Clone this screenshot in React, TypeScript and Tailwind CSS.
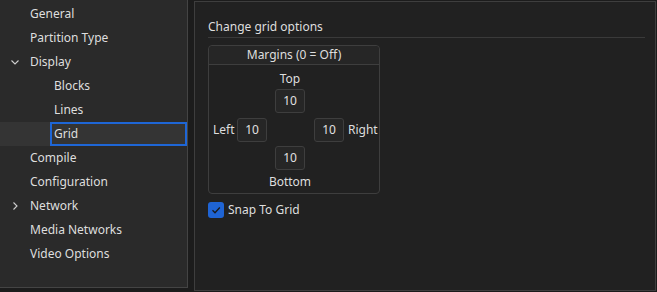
import React from "react";

const font = { fontFamily: '"Noto Sans", "Open Sans", sans-serif' };

function Chevron({ down }: { down: boolean }) {
  return (
    <svg width="10" height="10" viewBox="0 0 10 10" className="text-[#cfcfcf]">
      {down ? (
        <path d="M1.5 3.5 L5 7 L8.5 3.5" fill="none" stroke="currentColor" strokeWidth="1.1" />
      ) : (
        <path d="M3.5 1.5 L7 5 L3.5 8.5" fill="none" stroke="currentColor" strokeWidth="1.1" />
      )}
    </svg>
  );
}

type Item = { label: string; level: number; chevron?: "down" | "right"; selected?: boolean };

const items: Item[] = [
  { label: "General", level: 0 },
  { label: "Partition Type", level: 0 },
  { label: "Display", level: 0, chevron: "down" },
  { label: "Blocks", level: 1 },
  { label: "Lines", level: 1 },
  { label: "Grid", level: 1, selected: true },
  { label: "Compile", level: 0 },
  { label: "Configuration", level: 0 },
  { label: "Network", level: 0, chevron: "right" },
  { label: "Media Networks", level: 0 },
  { label: "Video Options", level: 0 },
];

function NumBox({ v }: { v: string }) {
  return (
    <div className="w-[30px] h-[24px] flex items-center justify-center rounded-[3px] border border-[#3e3e3e] bg-[#262626] text-[12px] text-[#e0e0e0]">
      {v}
    </div>
  );
}

export default function App() {
  return (
    <div className="w-[657px] h-[292px] bg-[#1c1c1c] flex text-[12px] text-[#dedede]" style={font}>
      <div className="w-[188px] h-[288px] bg-[#2a2a2a] border-r border-b border-[#444444] pt-[2px] flex flex-col">
        {items.map((it) => (
          <div
            key={it.label}
            className={`h-[24px] flex items-center ${it.selected ? "bg-[#343434]" : ""}`}
          >
            {it.level === 0 ? (
              <>
                <div className="w-[30px] flex items-center pl-[10px]">
                  {it.chevron ? <Chevron down={it.chevron === "down"} /> : null}
                </div>
                <span>{it.label}</span>
              </>
            ) : it.selected ? (
              <>
                <div className="w-[50px]" />
                <div className="flex-1 h-[24px] border-2 border-[#1e66d6] flex items-center pl-[2px]">
                  {it.label}
                </div>
              </>
            ) : (
              <>
                <div className="w-[54px]" />
                <span>{it.label}</span>
              </>
            )}
          </div>
        ))}
      </div>
      <div className="ml-[6px] mt-[1px] w-[462px] h-[290px] bg-[#212121] border border-[#3e3e3e] pl-[13px] pr-[10px]">
        <div className="h-[35px] flex items-end pb-[1px]">Change grid options</div>
        <div className="h-px bg-[#3a3a3a]" />
        <div className="mt-[7px] w-[172px] h-[149px] border border-[#3e3e3e] rounded-[4px] flex flex-col">
          <div className="h-[19px] flex items-center justify-center bg-[#262626] border-b border-[#3e3e3e] rounded-t-[4px]">
            Margins (0 = Off)
          </div>
          <div className="flex flex-col items-start pt-[5px]">
            <div className="w-[162px] flex flex-col items-center">
              <div className="h-[18px] flex items-center">Top</div>
              <div className="mt-[1px]">
                <NumBox v="10" />
              </div>
            </div>
            <div className="mt-[5px] flex items-center pl-[4px]">
              <span className="w-[24px]">Left</span>
              <NumBox v="10" />
              <div className="w-[47px]" />
              <NumBox v="10" />
              <span className="ml-[4px]">Right</span>
            </div>
            <div className="w-[162px] flex flex-col items-center">
              <div className="mt-[4px]">
                <NumBox v="10" />
              </div>
              <div className="h-[24px] flex items-center">Bottom</div>
            </div>
          </div>
        </div>
        <div className="mt-[8px] flex items-center h-[16px]">
          <div className="w-[16px] h-[16px] rounded-[3px] bg-[#1f64d4] flex items-center justify-center">
            <svg width="12" height="12" viewBox="0 0 12 12">
              <path d="M2.5 6.3 L5 8.8 L9.8 3.5" fill="none" stroke="#1a1a1a" strokeWidth="1.3" />
            </svg>
          </div>
          <span className="ml-[4px]">Snap To Grid</span>
        </div>
      </div>
    </div>
  );
}
